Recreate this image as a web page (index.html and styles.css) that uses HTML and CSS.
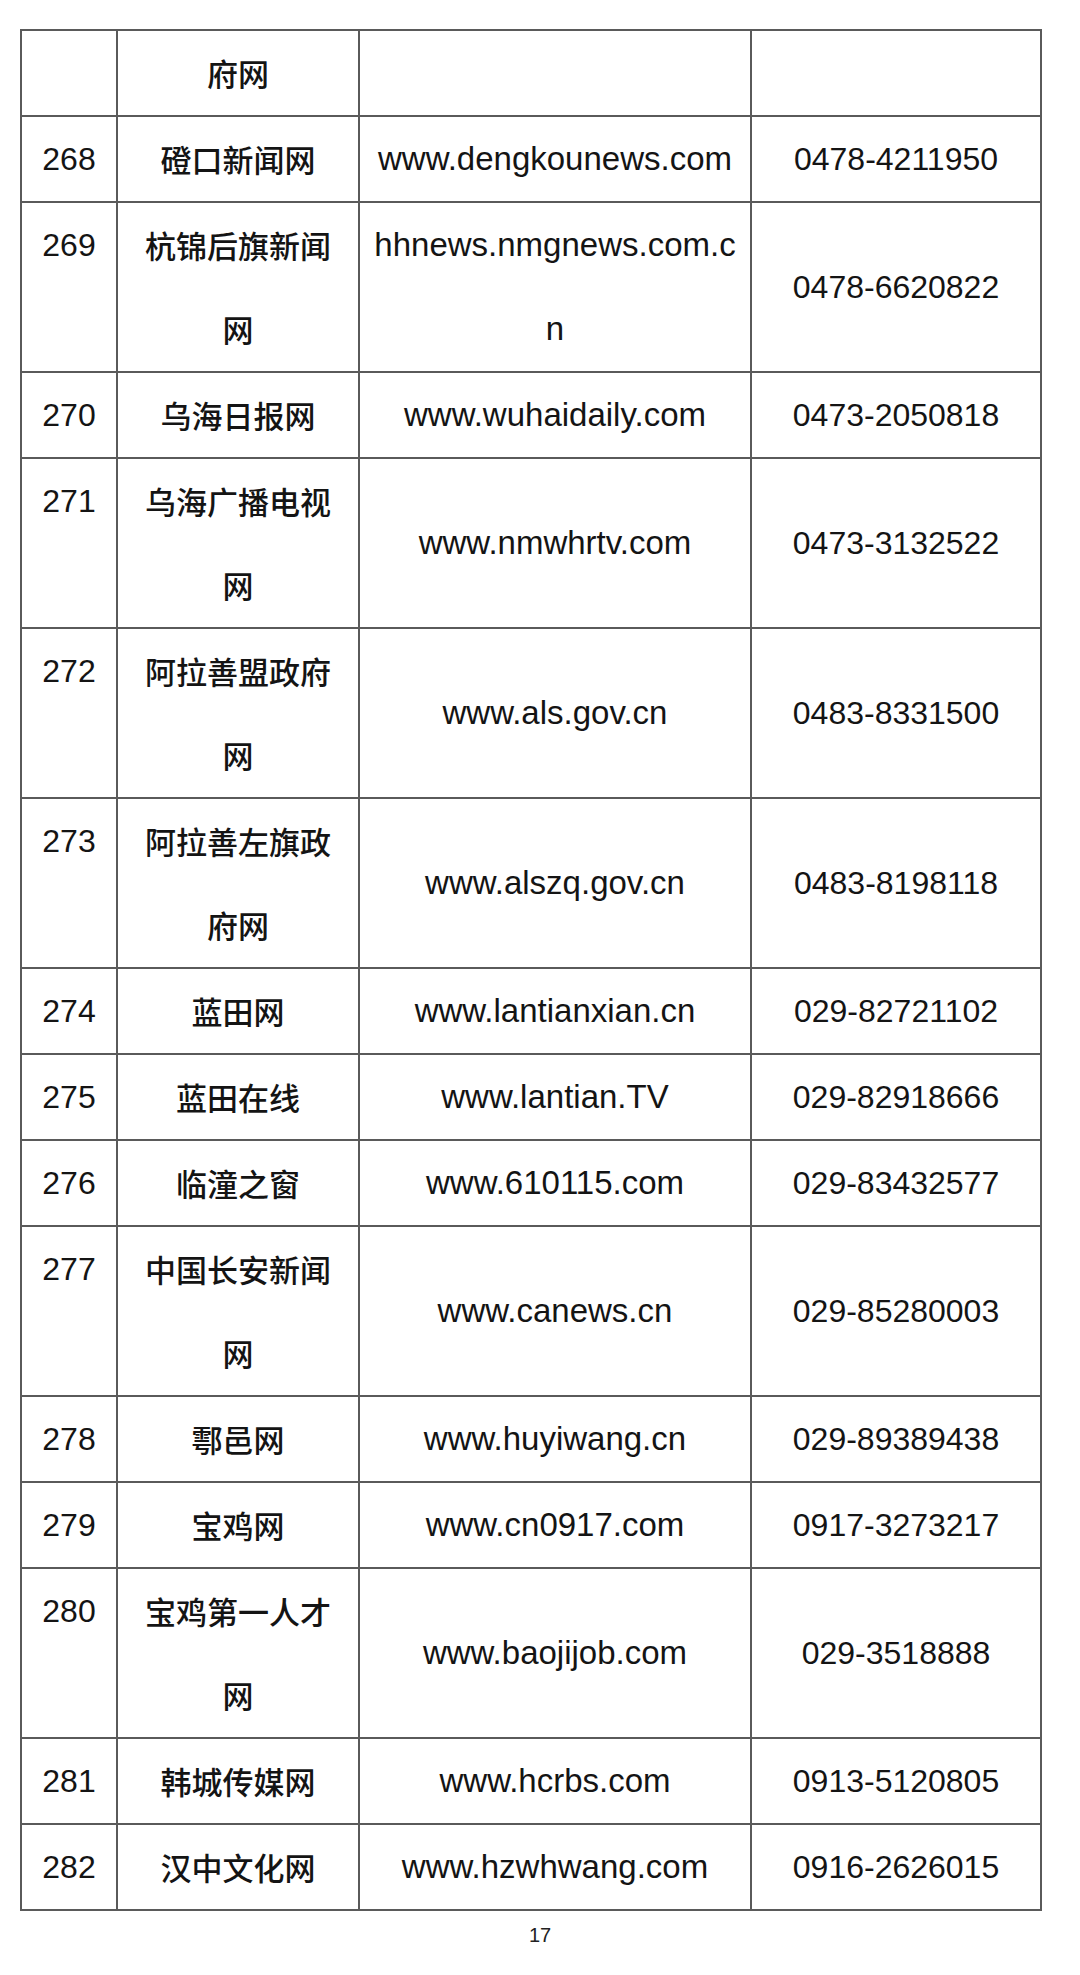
FILE: index.html
```html
<!DOCTYPE html>
<html lang="zh-CN">
<head>
<meta charset="utf-8">
<title>网站列表</title>
<link rel="stylesheet" href="styles.css">
</head>
<body>
<div class="page">
  <table class="list">
    <colgroup>
      <col class="c-no">
      <col class="c-name">
      <col class="c-url">
      <col class="c-tel">
    </colgroup>
    <tbody>
      <tr><td class="no"></td><td class="name">府网</td><td class="url"></td><td class="tel"></td></tr>
      <tr><td class="no">268</td><td class="name">磴口新闻网</td><td class="url">www.dengkounews.com</td><td class="tel">0478-4211950</td></tr>
      <tr><td class="no">269</td><td class="name">杭锦后旗新闻网</td><td class="url">hhnews.nmgnews.com.cn</td><td class="tel">0478-6620822</td></tr>
      <tr><td class="no">270</td><td class="name">乌海日报网</td><td class="url">www.wuhaidaily.com</td><td class="tel">0473-2050818</td></tr>
      <tr><td class="no">271</td><td class="name">乌海广播电视网</td><td class="url">www.nmwhrtv.com</td><td class="tel">0473-3132522</td></tr>
      <tr><td class="no">272</td><td class="name">阿拉善盟政府网</td><td class="url">www.als.gov.cn</td><td class="tel">0483-8331500</td></tr>
      <tr><td class="no">273</td><td class="name">阿拉善左旗政府网</td><td class="url">www.alszq.gov.cn</td><td class="tel">0483-8198118</td></tr>
      <tr><td class="no">274</td><td class="name">蓝田网</td><td class="url">www.lantianxian.cn</td><td class="tel">029-82721102</td></tr>
      <tr><td class="no">275</td><td class="name">蓝田在线</td><td class="url">www.lantian.TV</td><td class="tel">029-82918666</td></tr>
      <tr><td class="no">276</td><td class="name">临潼之窗</td><td class="url">www.610115.com</td><td class="tel">029-83432577</td></tr>
      <tr><td class="no">277</td><td class="name">中国长安新闻网</td><td class="url">www.canews.cn</td><td class="tel">029-85280003</td></tr>
      <tr><td class="no">278</td><td class="name">鄠邑网</td><td class="url">www.huyiwang.cn</td><td class="tel">029-89389438</td></tr>
      <tr><td class="no">279</td><td class="name">宝鸡网</td><td class="url">www.cn0917.com</td><td class="tel">0917-3273217</td></tr>
      <tr><td class="no">280</td><td class="name">宝鸡第一人才网</td><td class="url">www.baojijob.com</td><td class="tel">029-3518888</td></tr>
      <tr><td class="no">281</td><td class="name">韩城传媒网</td><td class="url">www.hcrbs.com</td><td class="tel">0913-5120805</td></tr>
      <tr><td class="no">282</td><td class="name">汉中文化网</td><td class="url">www.hzwhwang.com</td><td class="tel">0916-2626015</td></tr>
    </tbody>
  </table>
  <div class="pageno">17</div>
</div>
</body>
</html>
```

FILE: styles.css
```css
html, body {
  margin: 0;
  padding: 0;
  background: #ffffff;
}

.page {
  width: 1080px;
  padding: 29px 0 0 20px;
  box-sizing: border-box;
}

.list {
  border-collapse: collapse;
  table-layout: fixed;
  width: 1020px;
  color: #141414;
  font-family: "Liberation Sans", Arial, "Noto Sans CJK SC", sans-serif;
  font-size: 33px;
}

.c-no { width: 96px; }
.c-name { width: 242px; }
.c-url { width: 392px; }
.c-tel { width: 290px; }

.list td {
  border: 2px solid #5a5a5a;
  padding: 0 12px;
  line-height: 84px;
  height: 84px;
  text-align: center;
  vertical-align: middle;
}

.list td.no {
  vertical-align: top;
  font-size: 32px;
  padding: 0 4px;
}

.list td.name {
  vertical-align: top;
  font-family: "Noto Sans CJK SC", sans-serif;
  font-weight: 500;
  font-size: 31px;
  padding: 0 12px;
}

.list td.url {
  word-break: break-all;
}

.list td.tel {
  font-size: 32px;
}

.pageno {
  width: 1040px;
  text-align: center;
  font-family: "Liberation Sans", Arial, sans-serif;
  font-size: 20px;
  color: #222;
  margin-top: 13px;
}
```
